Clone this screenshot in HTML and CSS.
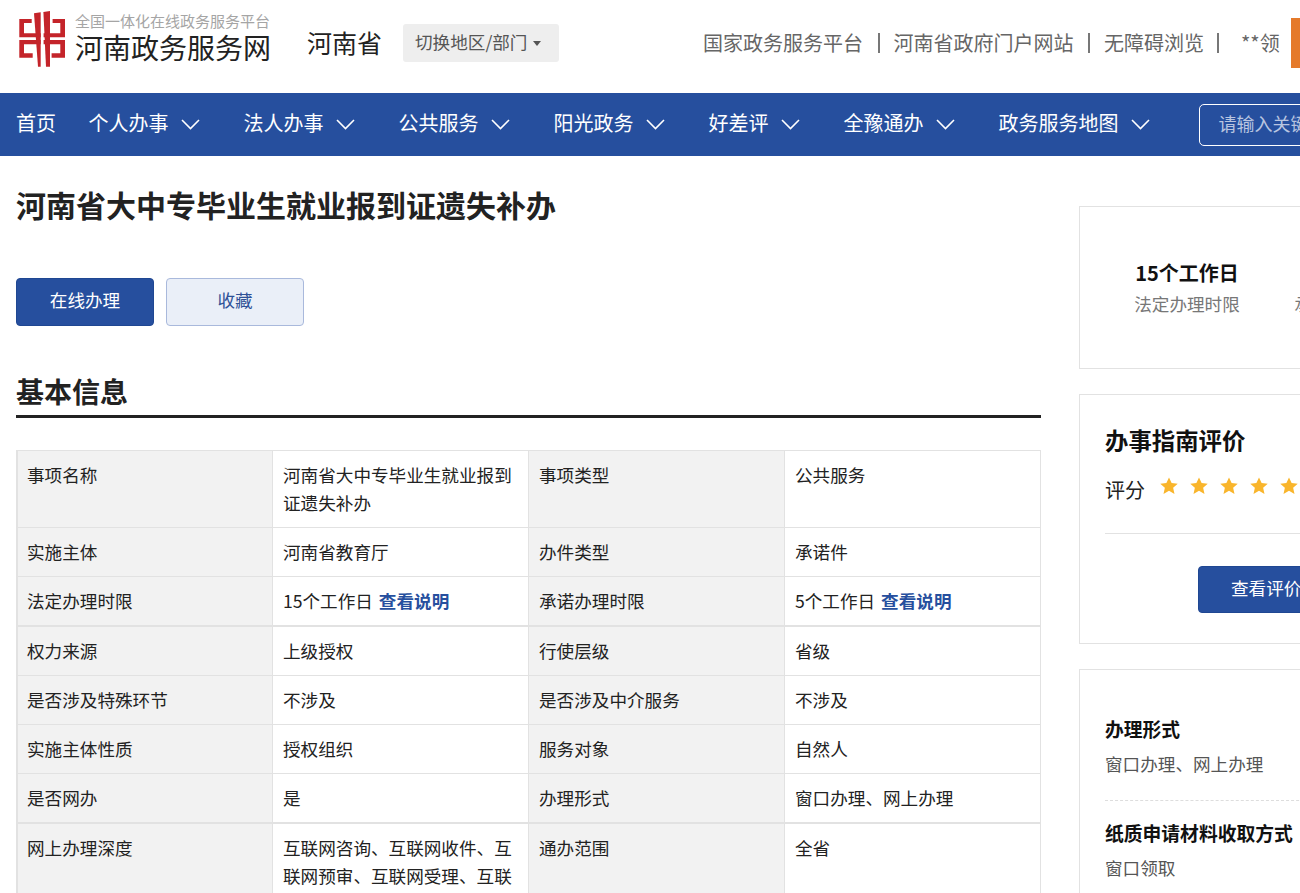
FILE: index.html
```html
<!DOCTYPE html>
<html lang="zh-CN">
<head>
  <meta charset="UTF-8">
  <title>河南省大中专毕业生就业报到证遗失补办</title>
  <link rel="stylesheet" href="styles.css">
</head>
<body>

<div class="page">
  <header class="top">
    <div class="logo">
      <svg class="logo-mark" viewBox="0 0 48 56" width="48" height="56">
        <path d="M0.300 8H12.700V12H5V22.300H21.700V26.300H0.300Z"/>
        <path d="M46 8H33.600V12H41.300V22.300H24.600V26.300H46Z"/>
        <path d="M0.300 29H21.700V33.300H5V42.300H13.700V46.700H0.300Z"/>
        <path d="M46 29H24.600V33.300H41.300V42.300H32.600V46.700H46Z"/>
        <path d="M15 2.300L21.700 1.300V55.700H19Z"/>
        <path d="M24.400 1L31 0V55.700H27Z"/>
      </svg>
      <div class="logo-text">
        <div class="logo-sub">全国一体化在线政务服务平台</div>
        <div class="logo-name">河南政务服务网</div>
      </div>
    </div>
    <div class="region">河南省</div>
    <div class="switch">切换地区/部门<span class="caret"></span></div>
    <div class="links">
      <a>国家政务服务平台</a><i></i>
      <a>河南省政府门户网站</a><i></i>
      <a>无障碍浏览</a><i class="sep-last"></i>
      <a class="user">**领</a>
      <span class="exit"></span>
    </div>
  </header>

  <nav class="nav">
    <a class="nav-item nav-home">首页</a>
    <a class="nav-item">个人办事<svg class="chev" viewBox="0 0 19 11"><path d="M1 1L9.500 9.500L18 1"/></svg></a>
    <a class="nav-item">法人办事<svg class="chev" viewBox="0 0 19 11"><path d="M1 1L9.500 9.500L18 1"/></svg></a>
    <a class="nav-item">公共服务<svg class="chev" viewBox="0 0 19 11"><path d="M1 1L9.500 9.500L18 1"/></svg></a>
    <a class="nav-item">阳光政务<svg class="chev" viewBox="0 0 19 11"><path d="M1 1L9.500 9.500L18 1"/></svg></a>
    <a class="nav-item">好差评<svg class="chev" viewBox="0 0 19 11"><path d="M1 1L9.500 9.500L18 1"/></svg></a>
    <a class="nav-item">全豫通办<svg class="chev" viewBox="0 0 19 11"><path d="M1 1L9.500 9.500L18 1"/></svg></a>
    <a class="nav-item nav-last">政务服务地图<svg class="chev" viewBox="0 0 19 11"><path d="M1 1L9.500 9.500L18 1"/></svg></a>
    <div class="search">请输入关键词</div>
  </nav>

  <div class="content">
    <main class="main">
      <h1>河南省大中专毕业生就业报到证遗失补办</h1>
      <div class="actions">
        <a class="btn btn-primary">在线办理</a>
        <a class="btn btn-light">收藏</a>
      </div>
      <h2>基本信息</h2>

      <table class="info">
        <tr><th>事项名称</th><td>河南省大中专毕业生就业报到证遗失补办</td><th>事项类型</th><td>公共服务</td></tr>
        <tr><th>实施主体</th><td>河南省教育厅</td><th>办件类型</th><td>承诺件</td></tr>
        <tr><th>法定办理时限</th><td>15个工作日 <a class="more">查看说明</a></td><th>承诺办理时限</th><td>5个工作日 <a class="more">查看说明</a></td></tr>
      </table>
      <table class="info">
        <tr><th>权力来源</th><td>上级授权</td><th>行使层级</th><td>省级</td></tr>
        <tr><th>是否涉及特殊环节</th><td>不涉及</td><th>是否涉及中介服务</th><td>不涉及</td></tr>
        <tr><th>实施主体性质</th><td>授权组织</td><th>服务对象</th><td>自然人</td></tr>
        <tr><th>是否网办</th><td>是</td><th>办理形式</th><td>窗口办理、网上办理</td></tr>
      </table>
      <table class="info">
        <tr><th>网上办理深度</th><td>互联网咨询、互联网收件、互联网预审、互联网受理、互联网办理、互联网办理结果信息反馈</td><th>通办范围</th><td>全省</td></tr>
      </table>
    </main>

    <aside class="side">
      <div class="card card-time">
        <div class="time-item">
          <strong>15个工作日</strong>
          <span>法定办理时限</span>
        </div>
        <div class="time-item">
          <strong>5个工作日</strong>
          <span>承诺办理时限</span>
        </div>
      </div>

      <div class="card card-rate">
        <h3>办事指南评价</h3>
        <div class="score">
          <span>评分</span>
          <svg class="star" viewBox="0 0 20 20"><path d="M10 0.500l2.900 6.300 6.800.700-5.100 4.500 1.500 6.800L10 15.200l-6.100 3.600 1.500-6.800L0.300 7.500l6.800-.700z"/></svg>
          <svg class="star" viewBox="0 0 20 20"><path d="M10 0.500l2.900 6.300 6.800.700-5.100 4.500 1.500 6.800L10 15.200l-6.100 3.600 1.500-6.800L0.300 7.500l6.800-.700z"/></svg>
          <svg class="star" viewBox="0 0 20 20"><path d="M10 0.500l2.900 6.300 6.800.700-5.100 4.500 1.500 6.800L10 15.200l-6.100 3.600 1.500-6.800L0.300 7.500l6.800-.700z"/></svg>
          <svg class="star" viewBox="0 0 20 20"><path d="M10 0.500l2.900 6.300 6.800.700-5.100 4.500 1.500 6.800L10 15.200l-6.100 3.600 1.500-6.800L0.300 7.500l6.800-.700z"/></svg>
          <svg class="star" viewBox="0 0 20 20"><path d="M10 0.500l2.900 6.300 6.800.700-5.100 4.500 1.500 6.800L10 15.200l-6.100 3.600 1.500-6.800L0.300 7.500l6.800-.700z"/></svg>
        </div>
        <div class="rate-foot">
          <a class="btn btn-primary btn-rate">查看评价</a>
        </div>
      </div>

      <div class="card card-facts">
        <div class="fact">
          <strong>办理形式</strong>
          <span>窗口办理、网上办理</span>
        </div>
        <div class="fact">
          <strong>纸质申请材料收取方式</strong>
          <span>窗口领取</span>
        </div>
      </div>
    </aside>
  </div>
</div>

</body>
</html>
```

FILE: styles.css
```css
html, body { margin: 0; padding: 0; height: 893px; overflow: hidden; background: #fff; }
body { font-family: "Noto Sans CJK SC", "Liberation Sans", sans-serif; color: #222; font-size: 17.6px; }
.page { width: 1500px; }

.top { height: 93px; display: flex; align-items: center; padding: 0 0 7px 19px; box-sizing: border-box; }
.logo { display: flex; align-items: flex-start; height: 93px; width: 288px; flex: none; margin-bottom: -7px; }
.logo-mark { fill: #c4242a; margin-top: 11px; flex: none; }
.logo-text { margin-left: 8px; margin-top: 12px; }
.logo-sub { font-size: 15px; line-height: 18px; color: #a5a5a5; white-space: nowrap; }
.logo-name { font-size: 28px; line-height: 34px; color: #222; white-space: nowrap; }
.region { font-size: 25px; line-height: 34px; padding-bottom: 2px; color: #222; width: 96px; flex: none; }
.switch { width: 156px; height: 38px; flex: none; box-sizing: border-box; padding-left: 12px; background: #eee; border-radius: 3px; color: #555; line-height: 36px; white-space: nowrap; }
.caret { display: inline-block; margin-left: 6px; vertical-align: 3px; border-top: 5px solid #555; border-left: 4px solid transparent; border-right: 4px solid transparent; }
.links { display: flex; align-items: center; margin-left: 144px; font-size: 20px; color: #666; white-space: nowrap; }
.links a { padding-bottom: 2px; }
.links i { width: 2px; height: 20px; background: #777; margin: 0 14px 0 14.500px; }
.links .sep-last { margin: 0 14px 0 13px; }
.links .user { margin-left: 8px; color: #666; }
.exit { width: 60px; height: 50px; margin-left: 11px; background: #e57a2b; }

.nav { height: 63px; background: #264f9e; display: flex; align-items: center; padding-left: 16px; color: #fff; font-size: 20px; white-space: nowrap; }
.nav-item { display: flex; align-items: center; margin-right: 44px; line-height: 30px; padding-bottom: 4px; }
.nav-item .chev { margin-top: 4px; }
.nav-home { margin-right: 32.600px; }
.nav-last { margin-right: 49px; }
.chev { width: 19px; height: 11px; margin-left: 12px; fill: none; stroke: #fff; stroke-width: 1.600; }
.search { width: 300px; height: 42px; box-sizing: border-box; border: 1px solid #fff; border-radius: 5px; padding-left: 19px; line-height: 36px; font-size: 18px; color: #b9c5e0; }

.content { display: flex; align-items: flex-start; padding-left: 16px; }
.main { width: 1025px; flex: none; }
h1 { margin: 28px 0 0; font-size: 30px; line-height: 40px; font-weight: bold; color: #222; white-space: nowrap; }
.actions { display: flex; gap: 12px; margin-top: 54px; }
.btn { display: block; box-sizing: border-box; text-align: center; width: 138px; height: 48px; line-height: 42px; border-radius: 4px; border: 1px solid #1f4792; }
.btn-primary { background: #264f9e; color: #fff; }
.btn-light { background: #eaeff8; color: #2f5197; border-color: #a9b9dc; }
h2 { margin: 46px 0 32px; padding-bottom: 5px; font-size: 28px; line-height: 38px; font-weight: bold; color: #222; border-bottom: 3px solid #222; }

.info { width: 1025px; table-layout: fixed; border-collapse: separate; border-spacing: 0; border-top: 1px solid #e2e2e2; border-left: 2px solid #e2e2e2; }
.info th, .info td { width: 235px; padding: 10px; font-weight: normal; font-size: 17.6px; line-height: 28px; text-align: left; vertical-align: top; border-right: 1px solid #e2e2e2; border-bottom: 1px solid #e2e2e2; }
.info th { background: #f2f2f2; color: #222; }
.info th:first-child { padding-left: 9px; }
.more { margin-left: 2px; color: #264f9e; font-weight: bold; }

.side { width: 400px; flex: none; margin-left: 38px; padding-top: 50px; }
.card { box-sizing: border-box; border: 1px solid #e2e2e2; margin-bottom: 25px; padding-left: 25px; }
.card-time { height: 163px; display: flex; gap: 54px; padding-left: 54px; padding-top: 50px; }
.time-item { width: 106px; flex: none; text-align: center; }
.time-item strong { display: block; font-size: 20px; line-height: 32px; color: #111; white-space: nowrap; }
.time-item span { display: block; font-size: 17.6px; line-height: 30px; color: #777; white-space: nowrap; }
.card-rate { height: 250px; padding-top: 26px; }
h3 { margin: 0; font-size: 23.400px; line-height: 38px; font-weight: bold; color: #111; }
.score { display: flex; align-items: center; gap: 12px; height: 40px; margin-top: 10px; font-size: 20px; line-height: 30px; }
.score span { margin: 1px 3px 0 0; }
.star { width: 18px; height: 18px; fill: #f9b52c; margin-top: -6px; }
.rate-foot { margin-top: 24px; padding-top: 32px; border-top: 1px solid #e2e2e2; padding-left: 93px; }
.btn-rate { width: 180px; height: 47px; text-align: left; padding-left: 32px; }
.card-facts { height: 400px; padding-top: 42px; padding-right: 25px; }
.fact { padding-bottom: 18px; border-bottom: 1px dashed #ddd; margin-bottom: 15px; width: 350px; }
.fact:last-child { border-bottom: 0; }
.fact strong { display: block; font-size: 18.800px; line-height: 34px; color: #111; white-space: nowrap; }
.fact span { display: block; font-size: 17.6px; line-height: 36px; color: #555; }
```
